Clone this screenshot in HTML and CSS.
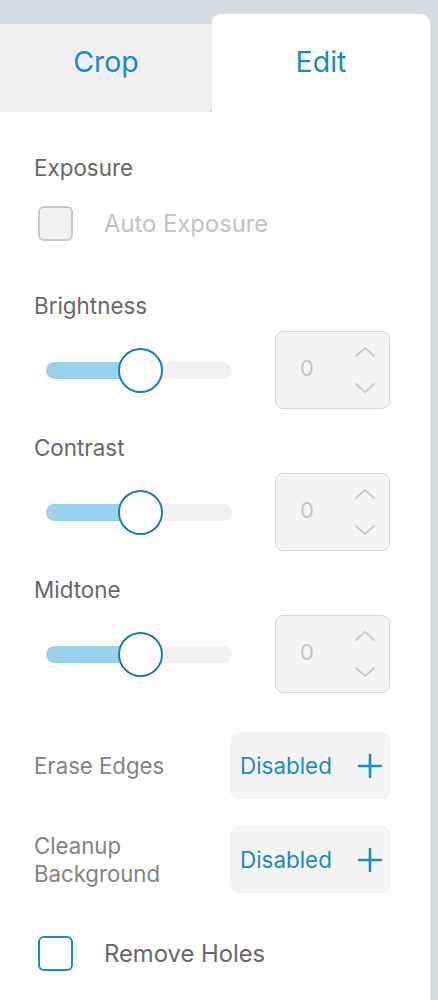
FILE: index.html
```html
<!DOCTYPE html>
<html>
<head>
<meta charset="utf-8">
<link rel="stylesheet" href="styles.css">
</head>
<body>
<div class="app">
  <div class="tabs">
    <div class="tab tab-crop">Crop</div>
    <div class="tab tab-edit">Edit</div>
  </div>
  <div class="panel">
    <div class="label">Exposure</div>
    <div class="check-row">
      <span class="box box-disabled"></span>
      <span class="check-text check-text-disabled">Auto Exposure</span>
    </div>

    <div class="label label-slider">Brightness</div>
    <div class="slider-row">
      <div class="track"><div class="fill"></div><div class="thumb"></div></div>
      <div class="num">
        <span class="num-val">0</span>
        <span class="spin">
          <svg width="22" height="12" viewBox="0 0 22 12"><path d="M2 10 L11 2 L20 10" fill="none" stroke="#c9c9c9" stroke-width="1.8" stroke-linecap="round" stroke-linejoin="round"/></svg>
          <svg width="22" height="12" viewBox="0 0 22 12"><path d="M2 2 L11 10 L20 2" fill="none" stroke="#c9c9c9" stroke-width="1.8" stroke-linecap="round" stroke-linejoin="round"/></svg>
        </span>
      </div>
    </div>

    <div class="label label-slider label-next">Contrast</div>
    <div class="slider-row">
      <div class="track"><div class="fill"></div><div class="thumb"></div></div>
      <div class="num">
        <span class="num-val">0</span>
        <span class="spin">
          <svg width="22" height="12" viewBox="0 0 22 12"><path d="M2 10 L11 2 L20 10" fill="none" stroke="#c9c9c9" stroke-width="1.8" stroke-linecap="round" stroke-linejoin="round"/></svg>
          <svg width="22" height="12" viewBox="0 0 22 12"><path d="M2 2 L11 10 L20 2" fill="none" stroke="#c9c9c9" stroke-width="1.8" stroke-linecap="round" stroke-linejoin="round"/></svg>
        </span>
      </div>
    </div>

    <div class="label label-slider label-next">Midtone</div>
    <div class="slider-row">
      <div class="track"><div class="fill"></div><div class="thumb"></div></div>
      <div class="num">
        <span class="num-val">0</span>
        <span class="spin">
          <svg width="22" height="12" viewBox="0 0 22 12"><path d="M2 10 L11 2 L20 10" fill="none" stroke="#c9c9c9" stroke-width="1.8" stroke-linecap="round" stroke-linejoin="round"/></svg>
          <svg width="22" height="12" viewBox="0 0 22 12"><path d="M2 2 L11 10 L20 2" fill="none" stroke="#c9c9c9" stroke-width="1.8" stroke-linecap="round" stroke-linejoin="round"/></svg>
        </span>
      </div>
    </div>

    <div class="opt-row opt-first">
      <div class="opt-label">Erase Edges</div>
      <div class="opt-btn">
        <span>Disabled</span>
        <svg width="26" height="26" viewBox="0 0 26 26"><path d="M13 2 V24 M2 13 H24" stroke="#1a8cc0" stroke-width="2.6" stroke-linecap="round"/></svg>
      </div>
    </div>
    <div class="opt-row">
      <div class="opt-label">Cleanup<br>Background</div>
      <div class="opt-btn">
        <span>Disabled</span>
        <svg width="26" height="26" viewBox="0 0 26 26"><path d="M13 2 V24 M2 13 H24" stroke="#1a8cc0" stroke-width="2.6" stroke-linecap="round"/></svg>
      </div>
    </div>

    <div class="check-row check-last">
      <span class="box box-active"></span>
      <span class="check-text">Remove Holes</span>
    </div>
  </div>
</div>
</body>
</html>
```

FILE: styles.css
```css
html, body {
  margin: 0;
  padding: 0;
  background: #d6dcdf;
  font-family: "Inter", "Liberation Sans", sans-serif;
}

.app {
  width: 430px;
}

.tabs {
  display: flex;
  padding-top: 14px;
  align-items: flex-start;
}

.tab {
  display: flex;
  justify-content: center;
  color: #1a8cc0;
  font-size: 28.5px;
  line-height: 32px;
  letter-spacing: 0;
}

.tab-crop {
  width: 212px;
  height: 88px;
  box-sizing: border-box;
  padding-top: 22px;
  margin-top: 10px;
  background: #efefef;
  border-bottom-right-radius: 6px;
}

.tab-edit {
  flex: 1;
  height: 98px;
  box-sizing: border-box;
  padding-top: 32px;
  background: #ffffff;
  border-radius: 9px 9px 0 0;
}

.panel {
  background: #ffffff;
  padding: 44px 0 40px 34px;
}

.label {
  font-size: 22.4px;
  line-height: 24px;
  color: #686868;
}

.check-row {
  display: flex;
  align-items: center;
  margin-top: 26px;
  padding-left: 4px;
  height: 35px;
}

.box {
  width: 35px;
  height: 35px;
  box-sizing: border-box;
  border-radius: 6px;
  border: 2.5px solid #c9c9c9;
  background: #f1f1f1;
}

.box-active {
  border-color: #1a8cc0;
  background: #ffffff;
}

.check-text {
  margin-left: 31px;
  font-size: 23.8px;
  color: #686868;
}

.check-text-disabled {
  color: #c2c2c2;
}

.label-slider {
  margin-top: 53px;
}

.label-next {
  margin-top: 27px;
}

.slider-row {
  display: flex;
  align-items: center;
  margin-top: 13px;
  height: 78px;
}

.track {
  position: relative;
  margin-left: 12px;
  width: 186px;
  height: 17px;
  border-radius: 9px;
  background: #f2f2f2;
}

.fill {
  width: 100px;
  height: 17px;
  border-radius: 9px;
  background: #9ad2ee;
}

.thumb {
  position: absolute;
  left: 72px;
  top: -14px;
  width: 45px;
  height: 45px;
  box-sizing: border-box;
  border-radius: 50%;
  border: 2.5px solid #1b7ea6;
  background: #ffffff;
}

.num {
  margin-left: 43px;
  width: 115px;
  height: 78px;
  box-sizing: border-box;
  border: 1px solid #d6d6d6;
  border-radius: 8px;
  background: #f5f5f5;
  display: flex;
  align-items: center;
}

.num-val {
  margin-left: 24px;
  padding-bottom: 5px;
  font-size: 22px;
  color: #c4c4c4;
}

.spin {
  margin-left: 40px;
  display: flex;
  flex-direction: column;
  gap: 24px;
}

.spin svg {
  display: block;
}

.opt-row {
  display: flex;
  align-items: center;
  margin-top: 27px;
  height: 67px;
}

.opt-first {
  margin-top: 39px;
}

.opt-label {
  width: 196px;
  font-size: 22.2px;
  line-height: 28px;
  color: #838383;
}

.opt-btn {
  width: 161px;
  height: 67px;
  box-sizing: border-box;
  padding: 0 8px 0 10px;
  border-radius: 9px;
  background: #f4f4f4;
  display: flex;
  align-items: center;
  justify-content: space-between;
  color: #1a8cc0;
  font-size: 22.4px;
}

.opt-btn svg {
  display: block;
}

.check-last {
  margin-top: 43px;
}
```
